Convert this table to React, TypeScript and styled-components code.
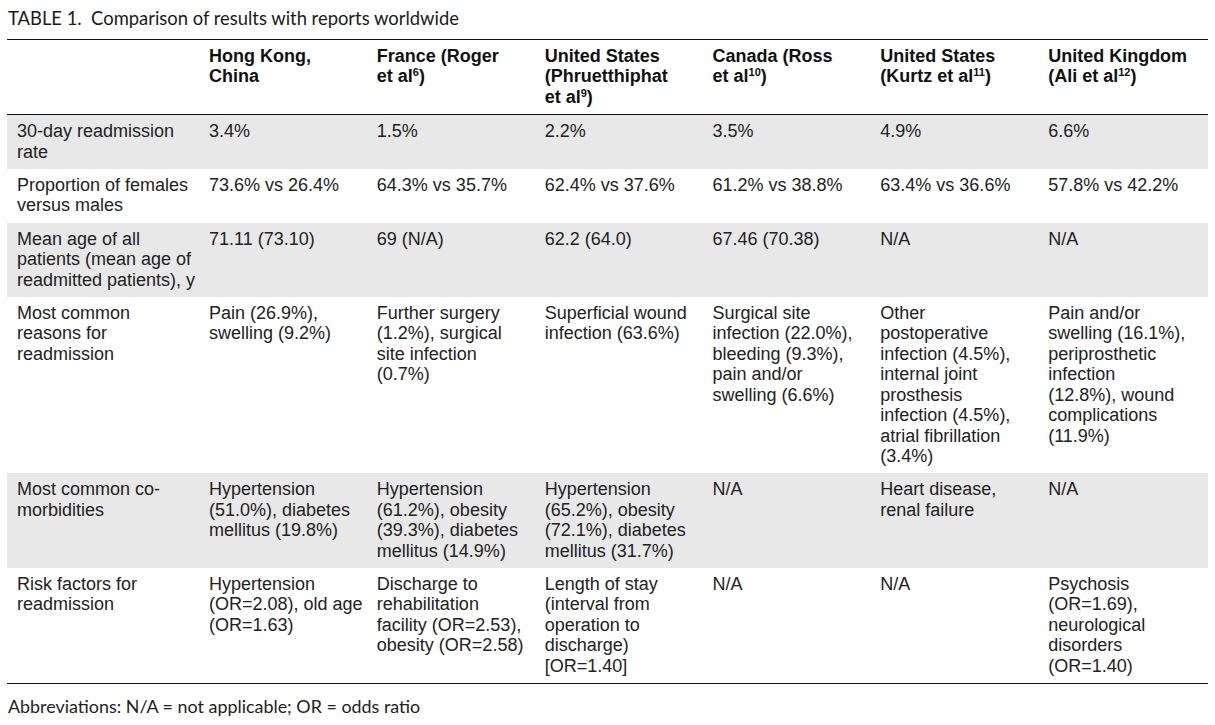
import React from "react";
import styled, { createGlobalStyle } from "styled-components";

const GlobalStyle = createGlobalStyle`
  html, body { margin: 0; padding: 0; background: #ffffff; }
  body { font-family: "Liberation Sans", Arial, sans-serif; color: #1c1c1c; }
`;

const Page = styled.div`
  width: 1215px;
  padding: 6px 7px 0 7px;
  box-sizing: border-box;
`;

const Title = styled.div`
  font-family: Lato, "Open Sans", sans-serif;
  font-size: 18.4px;
  line-height: 24px;
  color: #1a1a1a;
  padding-left: 1px;
  margin-bottom: 9px;
`;

const Table = styled.table`
  width: 1201px;
  border-collapse: collapse;
  table-layout: fixed;
  border-top: 1px solid #111;
  border-bottom: 1px solid #111;
`;

const HeadRow = styled.tr`
  border-bottom: 1px solid #111;
`;

const Th = styled.th<{ $first?: boolean }>`
  text-align: left;
  vertical-align: top;
  font-weight: 700;
  font-size: 18px;
  line-height: 20.4px;
  color: #111;
  padding: 6px 2px 7px ${(p) => (p.$first ? "10px" : "8px")};
`;

const BodyRow = styled.tr<{ $shaded: boolean }>`
  background: ${(p) => (p.$shaded ? "#e8e8e9" : "#ffffff")};
`;

const Td = styled.td<{ $first?: boolean }>`
  vertical-align: top;
  font-size: 18px;
  line-height: 20.4px;
  color: #222;
  white-space: pre-line;
  padding: 6px ${(p) => (p.$first ? "1px" : "2px")} 7px ${(p) => (p.$first ? "10px" : "8px")};
`;

const Sup = styled.sup`
  font-size: 11px;
  line-height: 0;
  vertical-align: 6px;
`;

const Footer = styled.div`
  font-family: Lato, "Open Sans", sans-serif;
  font-size: 17.9px;
  line-height: 22px;
  color: #222;
  padding: 11px 0 0 1px;
`;

const columns: React.ReactNode[] = [
  <>Hong Kong,<br />China</>,
  <>France (Roger<br />et al<Sup>6</Sup>)</>,
  <>United States<br />(Phruetthiphat<br />et al<Sup>9</Sup>)</>,
  <>Canada (Ross<br />et al<Sup>10</Sup>)</>,
  <>United States<br />(Kurtz et al<Sup>11</Sup>)</>,
  <>United Kingdom<br />(Ali et al<Sup>12</Sup>)</>,
];

const rows: string[][] = [
  ["30-day readmission\nrate", "3.4%", "1.5%", "2.2%", "3.5%", "4.9%", "6.6%"],
  [
    "Proportion of females\nversus males",
    "73.6% vs 26.4%",
    "64.3% vs 35.7%",
    "62.4% vs 37.6%",
    "61.2% vs 38.8%",
    "63.4% vs 36.6%",
    "57.8% vs 42.2%",
  ],
  [
    "Mean age of all\npatients (mean age of\nreadmitted patients), y",
    "71.11 (73.10)",
    "69 (N/A)",
    "62.2 (64.0)",
    "67.46 (70.38)",
    "N/A",
    "N/A",
  ],
  [
    "Most common\nreasons for\nreadmission",
    "Pain (26.9%),\nswelling (9.2%)",
    "Further surgery\n(1.2%), surgical\nsite infection\n(0.7%)",
    "Superficial wound\ninfection (63.6%)",
    "Surgical site\ninfection (22.0%),\nbleeding (9.3%),\npain and/or\nswelling (6.6%)",
    "Other\npostoperative\ninfection (4.5%),\ninternal joint\nprosthesis\ninfection (4.5%),\natrial fibrillation\n(3.4%)",
    "Pain and/or\nswelling (16.1%),\nperiprosthetic\ninfection\n(12.8%), wound\ncomplications\n(11.9%)",
  ],
  [
    "Most common co-\nmorbidities",
    "Hypertension\n(51.0%), diabetes\nmellitus (19.8%)",
    "Hypertension\n(61.2%), obesity\n(39.3%), diabetes\nmellitus (14.9%)",
    "Hypertension\n(65.2%), obesity\n(72.1%), diabetes\nmellitus (31.7%)",
    "N/A",
    "Heart disease,\nrenal failure",
    "N/A",
  ],
  [
    "Risk factors for\nreadmission",
    "Hypertension\n(OR=2.08), old age\n(OR=1.63)",
    "Discharge to\nrehabilitation\nfacility (OR=2.53),\nobesity (OR=2.58)",
    "Length of stay\n(interval from\noperation to\ndischarge)\n[OR=1.40]",
    "N/A",
    "N/A",
    "Psychosis\n(OR=1.69),\nneurological\ndisorders\n(OR=1.40)",
  ],
];

export default function App() {
  return (
    <>
      <GlobalStyle />
      <Page>
        <Title>TABLE 1.&nbsp; Comparison of results with reports worldwide</Title>
        <Table>
          <colgroup>
            <col style={{ width: 194 }} />
            <col />
            <col />
            <col />
            <col />
            <col />
            <col />
          </colgroup>
          <thead>
            <HeadRow>
              <Th $first />
              {columns.map((c, i) => (
                <Th key={i}>{c}</Th>
              ))}
            </HeadRow>
          </thead>
          <tbody>
            {rows.map((r, i) => (
              <BodyRow key={i} $shaded={i % 2 === 0}>
                {r.map((cell, j) => (
                  <Td key={j} $first={j === 0}>
                    {cell}
                  </Td>
                ))}
              </BodyRow>
            ))}
          </tbody>
        </Table>
        <Footer>Abbreviations: N/A = not applicable; OR = odds ratio</Footer>
      </Page>
    </>
  );
}
